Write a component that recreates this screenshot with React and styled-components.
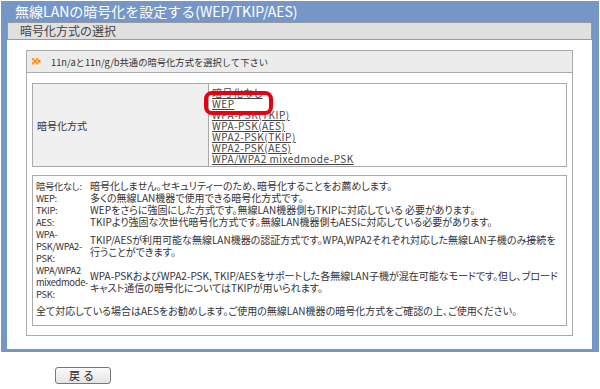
import React from 'react';
import styled, { createGlobalStyle } from 'styled-components';

const GlobalStyle = createGlobalStyle`
  body {
    margin: 0;
    background: #fff;
    font-family: "Noto Sans CJK JP", "Liberation Sans", sans-serif;
    color: #222;
  }
`;

const Frame = styled.div`
  margin: 1px 1px 0 1px;
  width: 598px;
  box-sizing: border-box;
  background: #7597c7;
  padding: 0 7px 3px 6px;
`;

const Title = styled.h1`
  margin: 0;
  height: 21px;
  padding-left: 8px;
  color: #fff;
  font-size: 14px;
  line-height: 21px;
  font-weight: normal;
  white-space: nowrap;
`;

const Sheet = styled.div`
  background: #fff;
`;

const SubHeader = styled.div`
  height: 16px;
  border: 1px solid #999;
  background: #e0e0e0;
  color: #444;
  font-size: 12px;
  line-height: 16px;
  padding-left: 12px;
`;

const Content = styled.div`
  padding: 10px 19px 13px;
`;

const Panel = styled.div`
  border: 1px solid #aaa;
`;

const PanelHead = styled.div`
  display: flex;
  align-items: center;
  gap: 10px;
  height: 21px;
  padding-left: 5px;
  background: #ececec;
  border-bottom: 1px solid #aaa;
  font-size: 9.3px;
  color: #333;
`;

const PanelBody = styled.div`
  padding: 10px 5px 9px;
  display: flex;
  flex-direction: column;
  gap: 8px;
`;

const ModeTable = styled.table`
  width: 100%;
  border-collapse: collapse;
  font-size: 10px;
  color: #333;
`;

const LabelCell = styled.td`
  width: 167px;
  border: 1px solid #aaa;
  background: #f0f0f0;
  padding: 0 4px;
  vertical-align: middle;
`;

const OptionCell = styled.td`
  position: relative;
  border: 1px solid #aaa;
  padding: 3px 3px 2px;
  line-height: 11px;
`;

const OptionLink = styled.a`
  display: block;
  width: max-content;
  height: 11px;
  color: #444;
  text-decoration: underline;
  font-size: 10px;
  letter-spacing: 0.5px;
  font-feature-settings: "palt";
`;

const Highlight = styled.div`
  position: absolute;
  left: -5px;
  top: 7px;
  width: 61px;
  height: 16px;
  border: 4px solid #e50012;
  border-radius: 8px;
  pointer-events: none;
`;

const DescBox = styled.div`
  border: 1px solid #aaa;
  padding: 4px 3px 8px;
  font-size: 10px;
  line-height: 12px;
  color: #333;
  font-feature-settings: "palt";
`;

const DescTable = styled.table`
  border-collapse: collapse;
  td {
    padding: 0;
    vertical-align: middle;
    white-space: nowrap;
  }
`;

const DescLabel = styled.td`
  width: 52px;
  && {
    padding-right: 2px;
  }
  font-size: 9.3px;
  letter-spacing: -0.3px;
`;

const Note = styled.p`
  margin: 5px 0 0;
  white-space: nowrap;
`;

const Footer = styled.div`
  padding: 15px 0 0 55px;
`;

const BackButton = styled.button`
  display: block;
  width: 56px;
  height: 17px;
  padding: 0;
  border: 1px solid #777;
  border-radius: 3px;
  background: linear-gradient(#fbfbfb, #e4e4e4);
  font-family: "Noto Sans CJK JP", sans-serif;
  font-size: 11px;
  line-height: 15px;
  color: #222;
  letter-spacing: 3px;
`;

function ArrowIcon() {
  const dots = [
    [0, 0, '#f7a030'], [2, 2, '#f08010'], [0, 4, '#f7a030'],
    [4, 0, '#f7a030'], [6, 2, '#f08010'], [4, 4, '#f7a030'],
  ];
  return (
    <svg width="9" height="7" viewBox="0 0 9 7">
      {dots.map(([x, y, c], i) => (
        <rect key={i} x={x} y={y} width="2.5" height="2.5" fill={c} />
      ))}
    </svg>
  );
}

const options = [
  '暗号化なし',
  'WEP',
  'WPA-PSK(TKIP)',
  'WPA-PSK(AES)',
  'WPA2-PSK(TKIP)',
  'WPA2-PSK(AES)',
  'WPA/WPA2 mixedmode-PSK',
];

const descriptions = [
  [['暗号化なし:'], ['暗号化しません。セキュリティーのため、暗号化することをお薦めします。']],
  [['WEP:'], ['多くの無線LAN機器で使用できる暗号化方式です。']],
  [['TKIP:'], ['WEPをさらに強固にした方式です。無線LAN機器側もTKIPに対応している 必要があります。']],
  [['AES:'], ['TKIPより強固な次世代暗号化方式です。無線LAN機器側もAESに対応している必要があります。']],
  [
    ['WPA-', 'PSK/WPA2-', 'PSK:'],
    ['TKIP/AESが利用可能な無線LAN機器の認証方式です。WPA,WPA2それぞれ対応した無線LAN子機のみ接続を', '行うことができます。'],
  ],
  [
    ['WPA/WPA2', 'mixedmode-', 'PSK:'],
    ['WPA-PSKおよびWPA2-PSK, TKIP/AESをサポートした各無線LAN子機が混在可能なモードです。但し、ブロード', 'キャスト通信の暗号化についてはTKIPが用いられます。'],
  ],
];

function Lines({ lines }) {
  return lines.map((line, i) => (
    <React.Fragment key={i}>
      {i > 0 && <br />}
      {line}
    </React.Fragment>
  ));
}

export default function App() {
  return (
    <>
      <GlobalStyle />
      <Frame>
        <Title>無線LANの暗号化を設定する(WEP/TKIP/AES)</Title>
        <Sheet>
          <SubHeader>暗号化方式の選択</SubHeader>
          <Content>
            <Panel>
              <PanelHead>
                <ArrowIcon />
                <span>11n/aと11n/g/b共通の暗号化方式を選択して下さい</span>
              </PanelHead>
              <PanelBody>
                <ModeTable>
                  <tbody>
                    <tr>
                      <LabelCell>暗号化方式</LabelCell>
                      <OptionCell>
                        {options.map((o) => (
                          <OptionLink key={o} href="#">{o}</OptionLink>
                        ))}
                        <Highlight />
                      </OptionCell>
                    </tr>
                  </tbody>
                </ModeTable>
                <DescBox>
                  <DescTable>
                    <tbody>
                      {descriptions.map(([label, text], i) => (
                        <tr key={i}>
                          <DescLabel><Lines lines={label} /></DescLabel>
                          <td><Lines lines={text} /></td>
                        </tr>
                      ))}
                    </tbody>
                  </DescTable>
                  <Note>全て対応している場合はAESをお勧めします。ご使用の無線LAN機器の暗号化方式をご確認の上、ご使用ください。</Note>
                </DescBox>
              </PanelBody>
            </Panel>
          </Content>
        </Sheet>
      </Frame>
      <Footer>
        <BackButton>戻る</BackButton>
      </Footer>
    </>
  );
}
